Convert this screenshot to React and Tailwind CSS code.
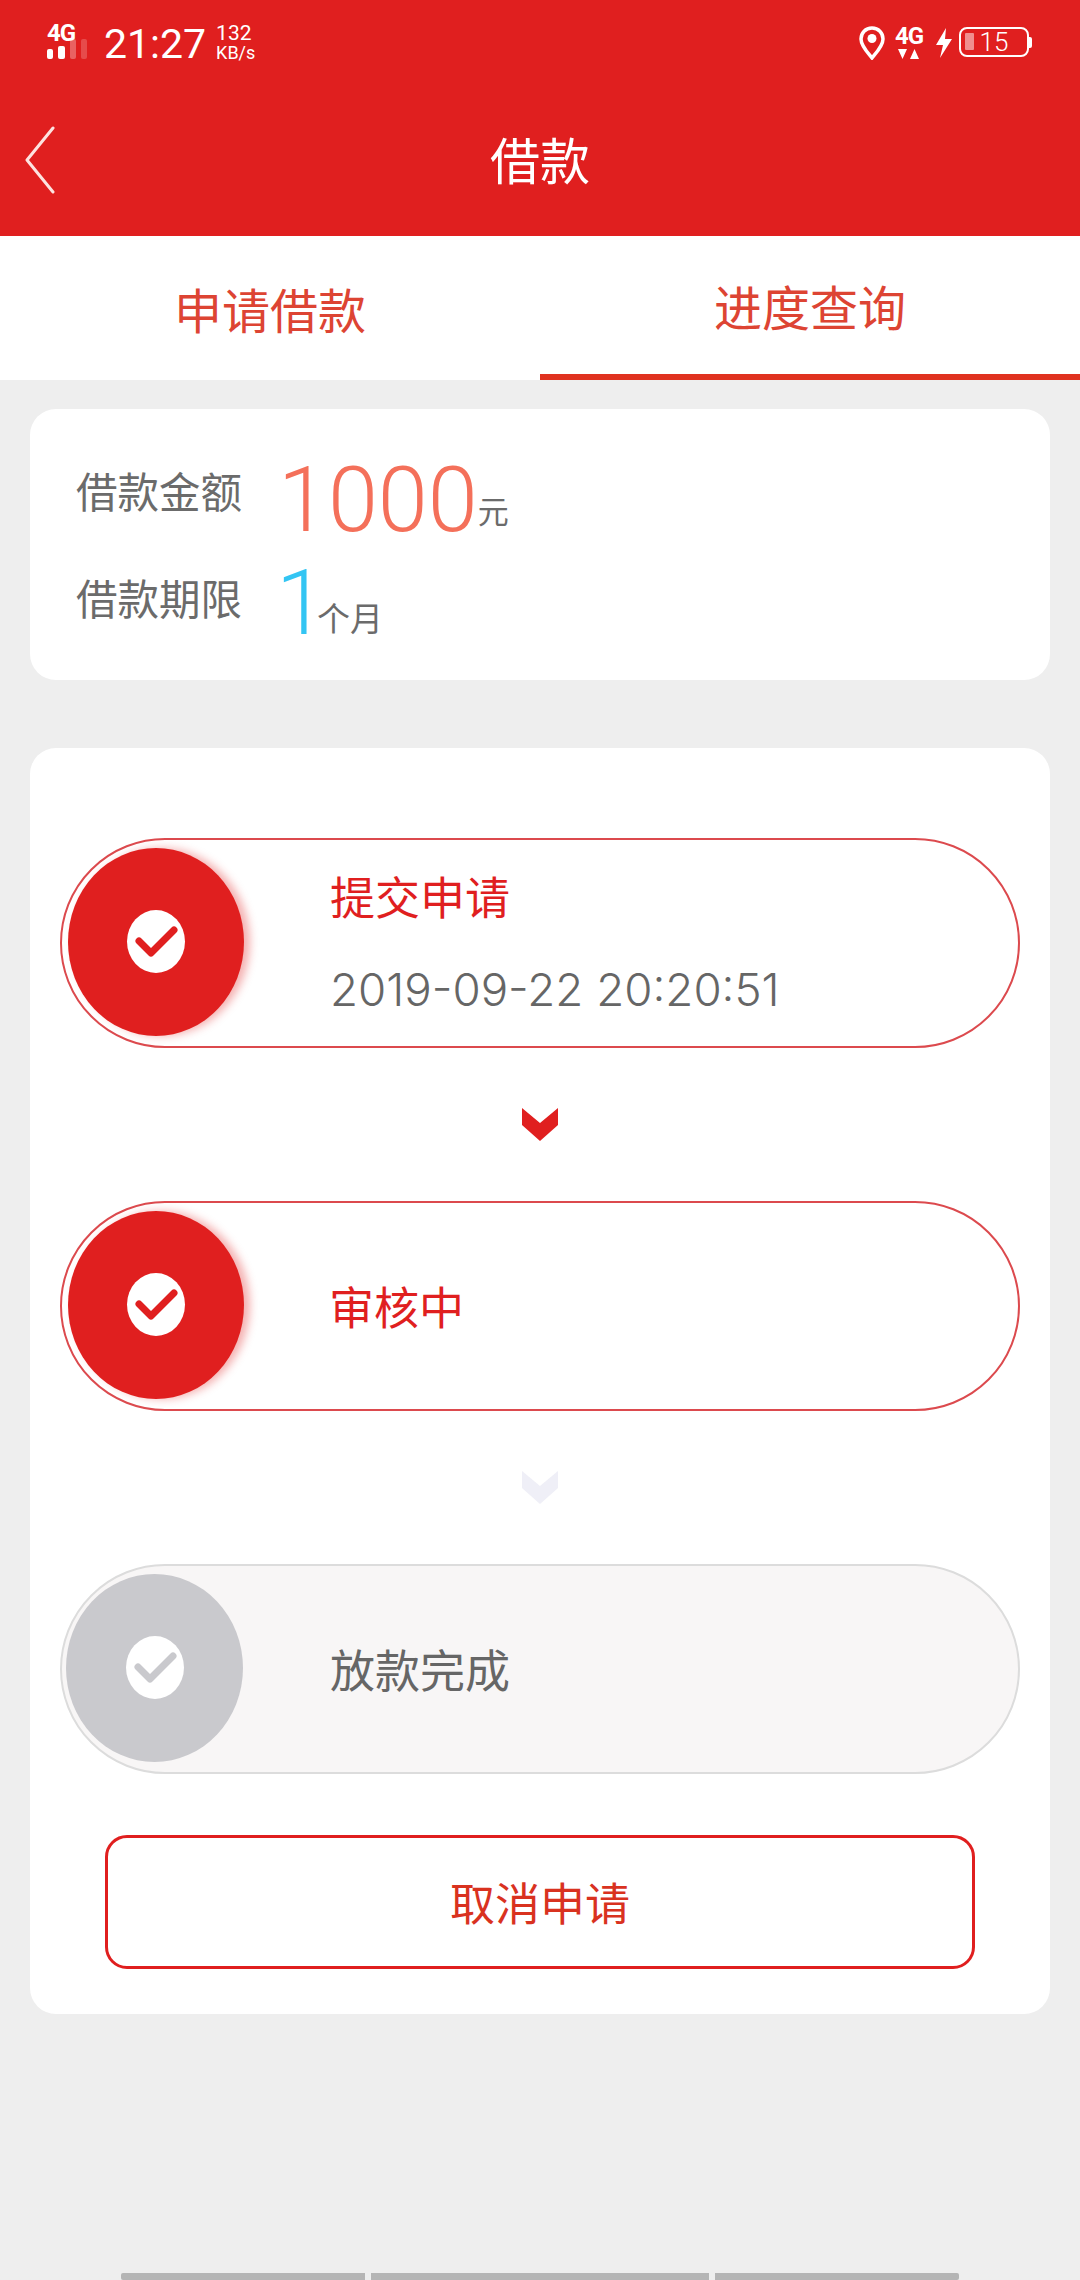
const Check = ({ color }) => (
  <svg viewBox="0 0 58 63" className="w-full h-full">
    <path d="M12 31 L24 43 L47 20" fill="none" stroke={color} strokeWidth="7" strokeLinecap="round" strokeLinejoin="round" />
  </svg>
);

const Chevron = ({ color }) => (
  <div className="h-[33px] flex justify-center">
    <svg width="36" height="33" viewBox="0 0 36 33">
      <path d="M0 0 L18 15 L36 0 L36 17 L18 33 L0 17 Z" fill={color} />
    </svg>
  </div>
);

const Pill = ({ muted, children, textMl }) => (
  <div className={`h-[210px] rounded-[105px] border-2 flex items-center ${muted ? "bg-[#f8f6f6] border-[#dcdcdc] pl-[4px]" : "bg-white border-[#dc4a4e] pl-[6px]"}`}>
    <div className={`shrink-0 rounded-[50%] h-[188px] -mt-[3px] flex items-center justify-center ${muted ? "w-[177px] bg-[#c9c9cd]" : "w-[176px] bg-[#e01f1f] shadow-[6px_0_8px_rgba(224,31,31,0.35)]"}`}>
      <div className="w-[58px] h-[63px] rounded-[50%] bg-white">
        <Check color={muted ? "#c9c9cd" : "#e01f1f"} />
      </div>
    </div>
    <div className={textMl}>{children}</div>
  </div>
);

export default function App() {
  return (
    <div className="w-[1080px] h-[2280px] overflow-hidden bg-[#eeeeee] flex flex-col font-['Noto_Sans_CJK_SC','Noto_Sans',sans-serif]">
      <div className="h-[236px] bg-[#e01f1f] shrink-0 flex flex-col text-white">
        <div className="h-[84px] flex items-start justify-between pl-[47px] pr-[48px] pt-[20px]">
          <div className="flex items-start">
            <div className="w-[44px] flex flex-col">
              <span className="font-['Roboto',sans-serif] font-bold text-[24px] leading-[20px] tracking-[-1px] mt-[3px]">4G</span>
              <div className="flex gap-[5px] mt-[2px] items-end h-[14px]">
                <span className="w-[6px] h-[10px] rounded-[2px] bg-white" />
                <span className="w-[7px] h-[13px] rounded-[2px] bg-white" />
                <span className="w-[6px] h-[20px] rounded-[2px] bg-white/30" />
                <span className="w-[6px] h-[20px] rounded-[2px] bg-white/20" />
              </div>
            </div>
            <span className="ml-[13px] font-['Roboto',sans-serif] text-[41px] leading-[44px] mt-[2px]">21:27</span>
            <div className="ml-[10px] flex flex-col font-['Roboto',sans-serif] mt-[3px]">
              <span className="text-[21px] leading-[20px]">132</span>
              <span className="text-[18px] leading-[20px]">KB/s</span>
            </div>
          </div>
          <div className="flex items-start">
            <svg width="26" height="34" viewBox="0 0 26 34" className="mt-[6px]">
              <path d="M13 2 C6.5 2 2 6.8 2 13 C2 20 9 27 13 32 C17 27 24 20 24 13 C24 6.8 19.5 2 13 2 Z" fill="none" stroke="white" strokeWidth="3.5" />
              <circle cx="13" cy="12.5" r="4.5" fill="white" />
            </svg>
            <div className="ml-[9px] flex flex-col items-center w-[30px]">
              <span className="font-['Roboto',sans-serif] font-bold text-[24px] leading-[20px] tracking-[-1px] mt-[6px]">4G</span>
              <svg width="22" height="11" viewBox="0 0 22 11" className="mt-[3px]">
                <path d="M0 0 L9 0 L4.5 10 Z M12 10 L21 10 L16.5 0 Z" fill="white" />
              </svg>
            </div>
            <svg width="18" height="30" viewBox="0 0 18 30" className="ml-[11px] mt-[8px]">
              <path d="M11 0 L1 17 L8 17 L5 30 L17 11 L10 11 Z" fill="white" />
            </svg>
            <div className="ml-[6px] mt-[7px] flex items-center">
              <div className="w-[70px] h-[30px] rounded-[8px] border-[2.5px] border-white relative flex items-center justify-center">
                <span className="absolute left-[4px] top-[4px] w-[9px] h-[17px] bg-white/50 rounded-[1px]" />
                <span className="font-['Roboto',sans-serif] text-[26px] leading-none font-light">15</span>
              </div>
              <span className="w-[3px] h-[11px] bg-white rounded-r-[2px]" />
            </div>
          </div>
        </div>
        <div className="flex-1 flex items-center relative pb-[4px]">
          <svg width="30" height="68" viewBox="0 0 30 68" className="ml-[25px] mt-[4px]">
            <path d="M28 2 L2 34 L28 66" fill="none" stroke="#fde3e0" strokeWidth="3" strokeLinecap="round" strokeLinejoin="round" />
          </svg>
          <span className="absolute inset-x-0 text-center text-[50px] leading-[60px]">借款</span>
        </div>
      </div>

      <div className="h-[144px] bg-white shrink-0 grid grid-cols-2 text-[#dd4433] text-[48px]">
        <div className="flex items-center justify-center">申请借款</div>
        <div className="flex items-center justify-center border-b-[6px] border-[#e0321f]">进度查询</div>
      </div>

      <div className="mx-[30px] mt-[29px] h-[271px] bg-white rounded-[26px] shrink-0 pl-[46px] pt-[51px] text-[#6b6b6b]">
        <div className="flex items-end h-[82px]">
          <span className="text-[41.5px] leading-[60px] w-[204px] mb-[22px]">借款金额</span>
          <span className="font-['Roboto',sans-serif] font-light text-[90px] leading-[82px] text-[#f4705a] ml-[-2px]">1000</span>
          <span className="text-[31px] leading-[40px] mb-[12px]">元</span>
        </div>
        <div className="flex items-end h-[82px] mt-[21px]">
          <span className="text-[41.5px] leading-[60px] w-[204px] mb-[18px]">借款期限</span>
          <span className="font-['Roboto',sans-serif] text-[90px] font-light leading-[82px] tracking-[-9px] text-[#33c5f3] ml-[-4px] -mt-[3px]">1</span>
          <span className="text-[33px] leading-[40px] mb-[8px]">个月</span>
        </div>
      </div>

      <div className="mx-[30px] mt-[68px] h-[1266px] bg-white rounded-[26px] shrink-0 px-[30px] pt-[90px] flex flex-col">
        <Pill textMl="ml-[86px]">
          <div className="flex flex-col">
            <span className="text-[#e01f1f] text-[45px] leading-[60px]">提交申请</span>
            <span className="text-[#666666] font-['Inter',sans-serif] font-light text-[45.7px] leading-[60px] mt-[34px]">2019-09-22 20:20:51</span>
          </div>
        </Pill>
        <div className="mt-[60px]"><Chevron color="#e01f1f" /></div>
        <div className="mt-[60px]">
          <Pill textMl="ml-[85px]">
            <span className="text-[#e01f1f] text-[45px] leading-[60px]">审核中</span>
          </Pill>
        </div>
        <div className="mt-[60px]"><Chevron color="#efeff7" /></div>
        <div className="mt-[60px]">
          <Pill muted textMl="ml-[87px]">
            <span className="text-[#666666] text-[45px] leading-[60px]">放款完成</span>
          </Pill>
        </div>
        <div className="mt-[61px] mx-[45px] h-[134px] rounded-[22px] border-[3px] border-[#e01f1f] flex items-center justify-center text-[#d9321f] text-[45px]">
          取消申请
        </div>
      </div>

      <div className="mt-auto h-[7px] flex gap-[6px] pl-[121px] shrink-0">
        <span className="w-[244px] bg-[#b5b5b5] rounded-l-[2px]" />
        <span className="w-[338px] bg-[#b5b5b5]" />
        <span className="w-[244px] bg-[#b5b5b5] rounded-r-[2px]" />
      </div>
    </div>
  );
}
